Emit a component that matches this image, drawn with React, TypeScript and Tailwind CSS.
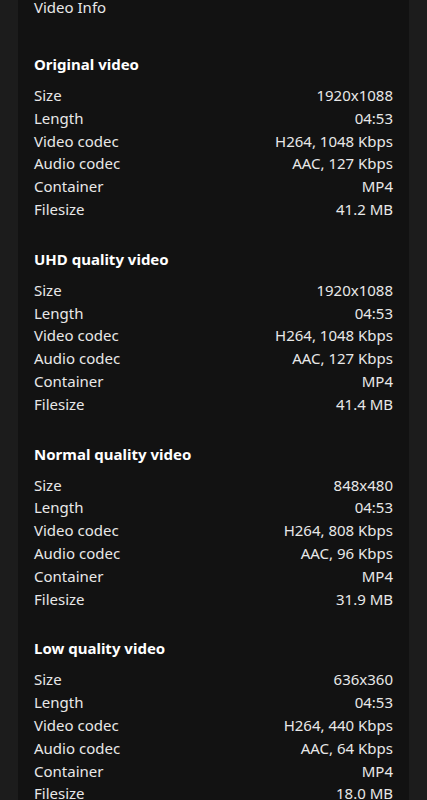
const sections = [
  {
    title: "Original video",
    rows: [
      ["Size", "1920x1088"],
      ["Length", "04:53"],
      ["Video codec", "H264, 1048 Kbps"],
      ["Audio codec", "AAC, 127 Kbps"],
      ["Container", "MP4"],
      ["Filesize", "41.2 MB"],
    ],
  },
  {
    title: "UHD quality video",
    rows: [
      ["Size", "1920x1088"],
      ["Length", "04:53"],
      ["Video codec", "H264, 1048 Kbps"],
      ["Audio codec", "AAC, 127 Kbps"],
      ["Container", "MP4"],
      ["Filesize", "41.4 MB"],
    ],
  },
  {
    title: "Normal quality video",
    rows: [
      ["Size", "848x480"],
      ["Length", "04:53"],
      ["Video codec", "H264, 808 Kbps"],
      ["Audio codec", "AAC, 96 Kbps"],
      ["Container", "MP4"],
      ["Filesize", "31.9 MB"],
    ],
  },
  {
    title: "Low quality video",
    rows: [
      ["Size", "636x360"],
      ["Length", "04:53"],
      ["Video codec", "H264, 440 Kbps"],
      ["Audio codec", "AAC, 64 Kbps"],
      ["Container", "MP4"],
      ["Filesize", "18.0 MB"],
    ],
  },
];

export default function App() {
  return (
    <div
      className="min-h-screen bg-[#1c1c1c] px-[18px] overflow-hidden"
      style={{ fontFamily: '"Noto Sans", "Open Sans", sans-serif' }}
    >
      <div className="bg-[#121212] px-4 pb-10 text-[15px] text-[#e8e8e8]">
        <div className="-mt-[5px] leading-[24px]">Video Info</div>
        {sections.map((s, i) => (
          <div key={s.title} className={i === 0 ? "mt-[33px]" : "mt-[26px]"}>
            <div className="font-bold text-white leading-[24px]">{s.title}</div>
            <div className="mt-[8px]">
              {s.rows.map(([k, v]) => (
                <div key={k} className="flex justify-between leading-[22.8px]">
                  <span>{k}</span>
                  <span>{v}</span>
                </div>
              ))}
            </div>
          </div>
        ))}
      </div>
    </div>
  );
}
